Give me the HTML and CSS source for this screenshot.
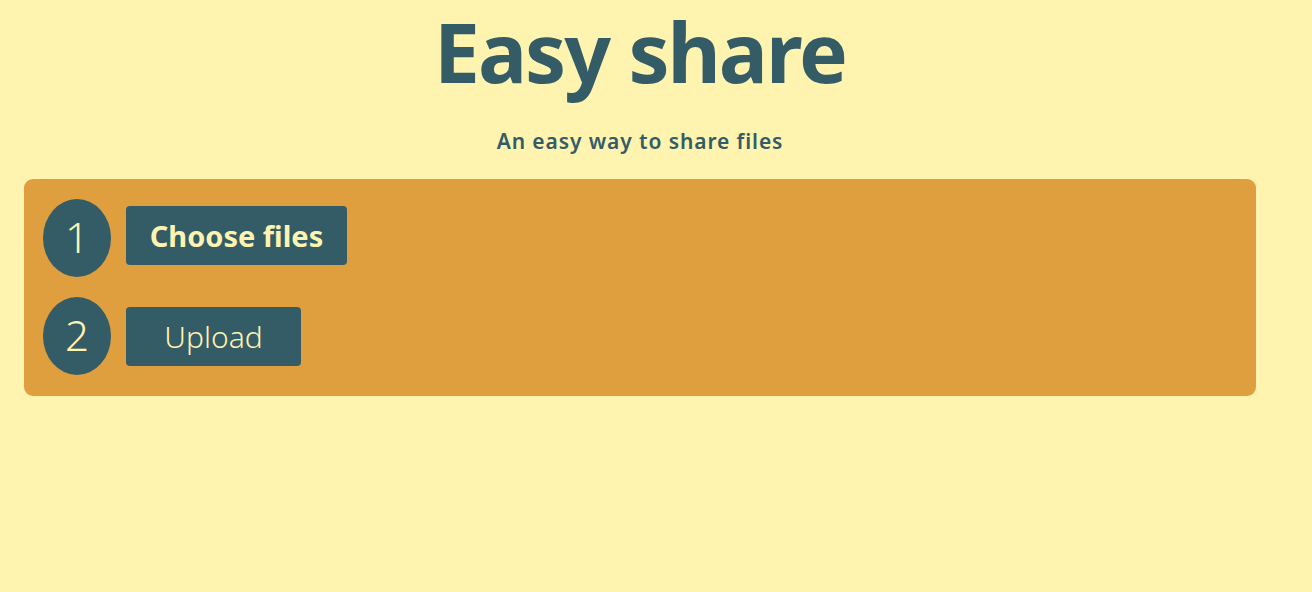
FILE: index.html
```html
<!DOCTYPE html>
<html lang="en">
<head>
<meta charset="utf-8">
<title>Easy share</title>
<link rel="stylesheet" href="styles.css">
</head>
<body>
<div class="page">
  <header class="hero">
    <h1 class="title">Easy share</h1>
    <p class="subtitle">An easy way to share files</p>
  </header>
  <main class="panel">
    <div class="step">
      <div class="step-num">1</div>
      <button class="btn btn-choose">Choose files</button>
    </div>
    <div class="step">
      <div class="step-num">2</div>
      <button class="btn btn-upload">Upload</button>
    </div>
  </main>
</div>
</body>
</html>
```
FILE: styles.css
```css
* { box-sizing: border-box; }
html, body { margin: 0; padding: 0; }
body {
  background: #fff3b0;
  color: #335c67;
  font-family: "Noto Sans", "Open Sans", sans-serif;
  height: 592px;
}
.page {
  width: 1232px;
  margin: 0 24px;
}
.hero {
  display: flex;
  flex-direction: column;
  align-items: center;
}
.title {
  margin: 2px 0 0;
  font-size: 82px;
  font-weight: 700;
  line-height: 98px;
  letter-spacing: -2px;
}
.subtitle {
  margin: 28px 0 0;
  font-size: 21px;
  font-weight: 600;
  line-height: 26px;
  letter-spacing: 0.9px;
}
.panel {
  margin-top: 25px;
  background: #e09f3e;
  border-radius: 9px;
  padding: 20px 19px 21px;
  display: flex;
  flex-direction: column;
  gap: 20px;
}
.step {
  display: flex;
  align-items: center;
  gap: 15px;
}
.step-num {
  width: 68px;
  height: 78px;
  border-radius: 50%;
  background: #335c67;
  color: #fff3b0;
  display: flex;
  align-items: center;
  justify-content: center;
  font-size: 42px;
  font-weight: 300;
  padding-bottom: 4px;
}
.btn {
  border: none;
  background: #335c67;
  color: #fff3b0;
  border-radius: 4px;
  height: 59px;
  font-family: inherit;
  padding: 0;
}
.btn-choose {
  width: 221px;
  font-size: 29px;
  font-weight: 700;
  margin-bottom: 5px;
}
.btn-upload {
  width: 175px;
  font-size: 30px;
  font-weight: 300;
}
```
